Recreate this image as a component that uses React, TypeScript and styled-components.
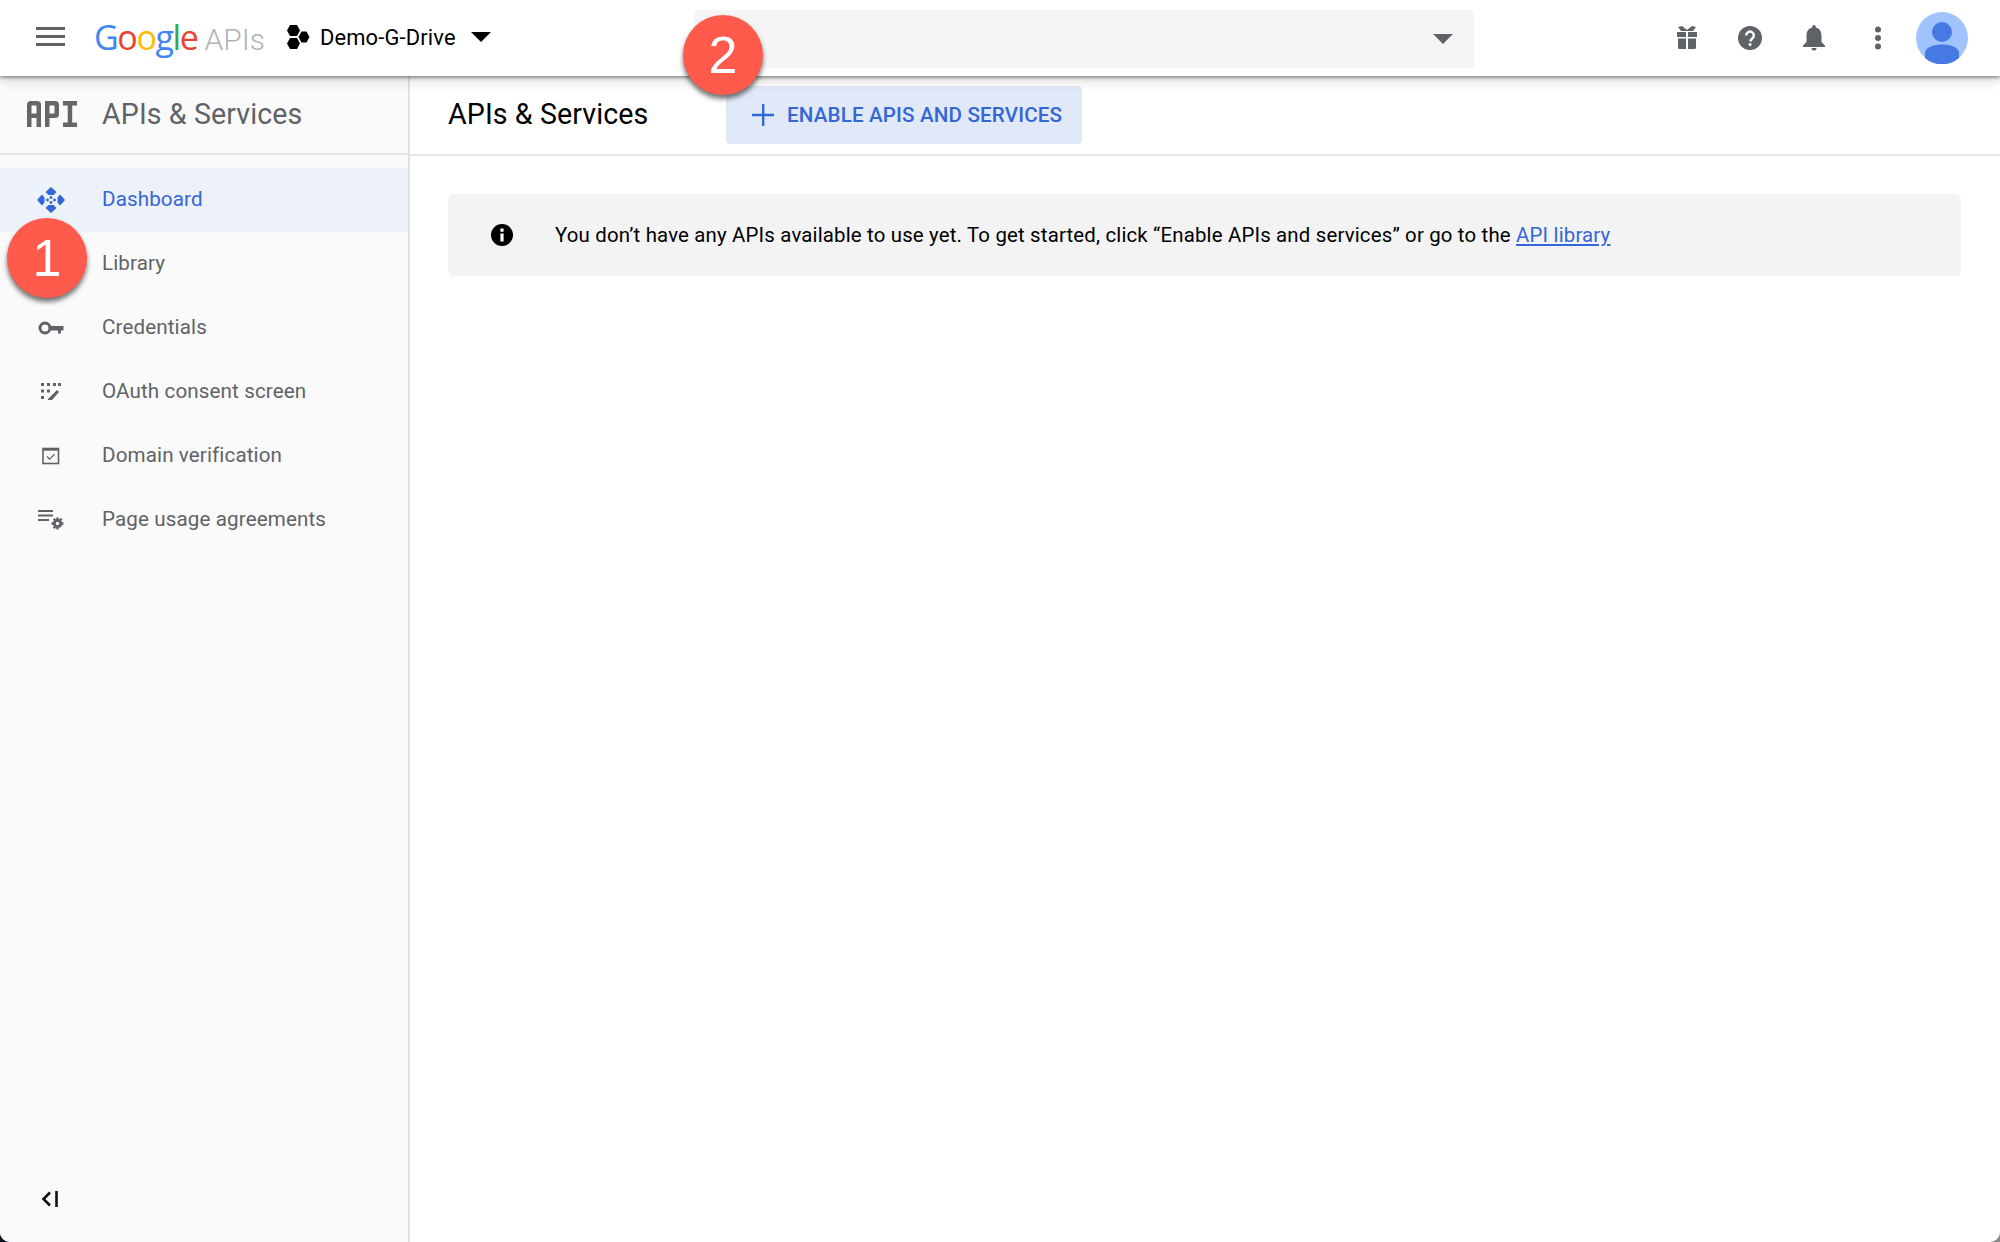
import React from "react";
import styled, { createGlobalStyle } from "styled-components";

const GlobalStyle = createGlobalStyle`
  html, body {
    margin: 0;
    padding: 0;
    background: linear-gradient(to right, #0d1420 50%, #8a8a8a 50%);
  }
  body {
    font-family: Roboto, "Liberation Sans", sans-serif;
  }
`;

const Page = styled.div`
  position: relative;
  width: 2000px;
  height: 1242px;
  background: #fff;
  overflow: hidden;
  border-bottom-left-radius: 10px;
  border-bottom-right-radius: 10px;
  display: flex;
  flex-direction: column;
`;

const TopBar = styled.header`
  position: relative;
  z-index: 2;
  flex: none;
  height: 76px;
  box-sizing: border-box;
  background: #fff;
  box-shadow: 0 2px 3px rgba(0, 0, 0, 0.36), 0 4px 12px rgba(0, 0, 0, 0.16);
  display: flex;
  align-items: center;
  padding: 0 0 0 36px;
`;

const Menu = styled.div`
  width: 29px;
  height: 19px;
  margin-top: -3px;
  display: flex;
  flex-direction: column;
  justify-content: space-between;

  span {
    display: block;
    height: 3px;
    background: #5f6368;
  }
`;

const Logo = styled.div`
  margin-left: 29px;
  width: 170px;
  display: flex;
  align-items: baseline;
  font-family: "Open Sans", sans-serif;
  font-size: 34px;
  letter-spacing: -1.4px;
  margin-top: -3px;
`;

const Letter = styled.span<{ $color: string }>`
  color: ${(p) => p.$color};
`;

const LogoApis = styled.span`
  margin-left: 7px;
  color: #b3b3b3;
  font-family: Roboto, sans-serif;
  font-weight: 300;
  font-size: 30px;
  letter-spacing: 0;
`;

const Project = styled.div`
  margin-left: 23px;
  width: 383px;
  display: flex;
  align-items: center;
  margin-top: -2px;
  color: #000;
  font-size: 21.9px;
  letter-spacing: 0.15px;

  span {
    margin-left: 10px;
  }

  svg:last-child {
    margin-left: 15px;
  }
`;

const SearchBox = styled.div`
  margin-left: 24px;
  width: 780px;
  height: 58px;
  margin-top: 2px;
  border-radius: 2px;
  background: #f5f5f5;
  display: flex;
  align-items: center;
  justify-content: flex-end;
  padding-right: 21px;
  box-sizing: border-box;
`;

const TopIcons = styled.div`
  margin-left: 202px;
  display: flex;
  align-items: center;
  gap: 40px;
  margin-top: -1px;
`;

const Avatar = styled.div`
  margin-left: 26px;
  width: 52px;
  height: 52px;
`;

const Body = styled.div`
  flex: 1;
  display: flex;
  min-height: 0;
`;

const Sidebar = styled.aside`
  flex: none;
  width: 410px;
  box-sizing: border-box;
  background: #fafafa;
  border-right: 2px solid #e2e2e2;
  display: flex;
  flex-direction: column;
`;

const SideHead = styled.div`
  flex: none;
  height: 79px;
  box-sizing: border-box;
  border-bottom: 2px solid #e6e6e6;
  display: flex;
  align-items: center;
  padding: 0 0 1px 27px;
  color: #5f6368;
  font-size: 28.6px;
  letter-spacing: 0.1px;
`;

const ApiBadge = styled.svg`
  width: 50px;
  height: 26px;
  margin-right: 25px;
  flex: none;
`;

const NavList = styled.nav`
  flex: 1;
  padding-top: 13px;
`;

const NavRow = styled.div<{ $active?: boolean }>`
  height: 64px;
  display: flex;
  align-items: center;
  padding: 0 0 2px 36px;
  box-sizing: border-box;
  font-size: 20.6px;
  letter-spacing: 0.12px;
  color: ${(p) => (p.$active ? "#3367d6" : "#5f6368")};
  background: ${(p) => (p.$active ? "#ecf1fa" : "transparent")};
`;

const NavIcon = styled.span`
  flex: none;
  width: 30px;
  height: 30px;
  margin: 2px 36px 0 0;
  display: flex;
  align-items: center;
  justify-content: center;
`;

const Collapse = styled.div`
  flex: none;
  height: 84px;
  display: flex;
  padding: 33px 0 0 41px;
  box-sizing: border-box;
`;

const Main = styled.main`
  flex: 1;
  min-width: 0;
`;

const MainHead = styled.div`
  height: 80px;
  box-sizing: border-box;
  border-bottom: 2px solid #e6e6e6;
  display: flex;
  align-items: center;
  padding-left: 38px;
`;

const Title = styled.h1`
  margin: 0 0 2px;
  width: 278px;
  font-size: 28.6px;
  font-weight: 400;
  color: #000;
  letter-spacing: 0.1px;
`;

const EnableButton = styled.div`
  width: 356px;
  height: 58px;
  box-sizing: border-box;
  border-radius: 4px;
  background: #e1e8f7;
  color: #3367d6;
  display: flex;
  align-items: center;
  padding-left: 26px;
  font-size: 20.6px;
  font-weight: 500;
  letter-spacing: 0.15px;

  svg {
    margin-right: 13px;
  }
`;

const InfoBox = styled.div`
  margin: 38px 39px 0 38px;
  height: 82px;
  border-radius: 6px;
  background: #f3f3f3;
  display: flex;
  align-items: center;
  padding-left: 43px;
  font-size: 20.4px;
  letter-spacing: 0.175px;
  color: #000;

  svg {
    margin-right: 42px;
    flex: none;
  }

  a {
    color: #3367d6;
    text-decoration: underline;
  }
`;

const Step = styled.div<{ $left: number; $top: number }>`
  position: absolute;
  z-index: 3;
  left: ${(p) => p.$left}px;
  top: ${(p) => p.$top}px;
  width: 80px;
  height: 80px;
  border-radius: 50%;
  background: #ff5a4b;
  box-shadow: 0 4px 5px rgba(0, 0, 0, 0.55);
  color: #fff;
  font-family: "Liberation Sans", Arial, sans-serif;
  font-size: 52px;
  line-height: 80px;
  text-align: center;
`;

const navItems = [
  {
    label: "Dashboard",
    active: true,
    icon: (
      <svg width="28" height="26" viewBox="0 0 28 26" fill="#3367d6">
        <path d="M14 0l5.500 5-3 3h-5l-3-3zM14 26l-5.500-5 3-3h5l3 3zM0 13l5-5.500 2.500 3v5L5 18.500zM28 13l-5 5.500-2.500-3v-5l2.500-3z" />
        <circle cx="10.500" cy="13" r="1.400" />
        <circle cx="17.500" cy="13" r="1.400" />
        <circle cx="14" cy="10.500" r="1.400" />
        <circle cx="14" cy="15.500" r="1.400" />
      </svg>
    ),
  },
  { label: "Library", icon: null },
  {
    label: "Credentials",
    icon: (
      <svg width="26" height="14" viewBox="0 0 26 14">
        <circle cx="7" cy="7" r="5" fill="none" stroke="#5f6368" strokeWidth="3" />
        <path d="M11 5h14.500v4.500H23v3h-3v-3h-9z" fill="#5f6368" />
      </svg>
    ),
  },
  {
    label: "OAuth consent screen",
    icon: (
      <svg width="20" height="18" viewBox="0 0 20 18" fill="#5f6368">
        <rect x="0" y="0" width="3" height="3" />
        <rect x="6" y="0" width="3" height="3" />
        <rect x="12" y="0" width="3" height="3" />
        <rect x="17" y="0" width="3" height="3" />
        <rect x="0" y="6.500" width="3" height="3" />
        <rect x="6" y="6.500" width="3" height="3" />
        <rect x="0" y="13" width="3" height="3" />
        <path d="M7 16l9-9 2 2-7 8H7z" />
      </svg>
    ),
  },
  {
    label: "Domain verification",
    icon: (
      <svg width="18" height="18" viewBox="0 0 18 18" fill="none" stroke="#5f6368">
        <rect x="1" y="1.500" width="15.500" height="15" strokeWidth="1.600" />
        <path d="M1 2.500h15.500" strokeWidth="2.400" />
        <path d="M5 9.500l2.600 2.600 5-5" strokeWidth="1.300" />
      </svg>
    ),
  },
  {
    label: "Page usage agreements",
    icon: (
      <svg width="26" height="20" viewBox="0 0 26 20" fill="#5f6368">
        <rect x="0" y="0" width="15" height="2" />
        <rect x="0" y="4.500" width="15" height="2" />
        <rect x="0" y="9" width="11" height="2" />
        <circle cx="19.500" cy="13.500" r="3.200" fill="none" stroke="#5f6368" strokeWidth="3" />
        <path d="M18.300 7.500h2.400v2h-2.400zM18.300 17.500h2.400v2h-2.400zM13.500 12.300h2v2.400h-2zM23.500 12.300h2v2.400h-2zM14.800 9.600l1.700-1.700 1.400 1.400-1.700 1.700zM21.100 15.900l1.700-1.700 1.400 1.400-1.700 1.700zM22.800 7.900l1.700 1.700-1.400 1.400-1.700-1.700zM16.500 19.100l-1.700-1.700 1.400-1.400 1.700 1.700z" />
      </svg>
    ),
  },
];

const logoLetters: [string, string][] = [
  ["G", "#4285f4"],
  ["o", "#ea4335"],
  ["o", "#fbbc05"],
  ["g", "#4285f4"],
  ["l", "#34a853"],
  ["e", "#ea4335"],
];

const App = () => {
  return (
    <Page>
      <GlobalStyle />
      <TopBar>
        <Menu>
          <span />
          <span />
          <span />
        </Menu>
        <Logo>
          {logoLetters.map(([ch, color], i) => (
            <Letter key={i} $color={color}>
              {ch}
            </Letter>
          ))}
          <LogoApis>APIs</LogoApis>
        </Logo>
        <Project>
          <svg width="23" height="24" viewBox="0 0 23 24" fill="#000">
            <path d="M3 0h7l3 5.500-3 5.500H3L0 5.500zM3 13h7l3 5.500L10 24H3L0 18.500zM14.500 6.500h5l3 5.500-3 5.500h-5L11.500 12z" />
          </svg>
          <span>Demo-G-Drive</span>
          <svg width="20" height="10" viewBox="0 0 20 10" fill="#000">
            <path d="M0 0h20L10 10z" />
          </svg>
        </Project>
        <SearchBox>
          <svg width="20" height="10" viewBox="0 0 20 10" fill="#5f6368">
            <path d="M0 0h20L10 10z" />
          </svg>
        </SearchBox>
        <TopIcons>
          <svg width="22" height="24" viewBox="0 0 22 24" fill="#5f6368">
            <path d="M1 6h9v5H1zM12 6h9v5h-9zM2 12.500h8V23H3.500A1.500 1.500 0 0 1 2 21.500zM12 12.500h8v9a1.500 1.500 0 0 1-1.500 1.500H12z" />
            <path d="M2 1l4-1 5 4 5-4 4 1-3 4H5z" />
          </svg>
          <svg width="24" height="24" viewBox="0 0 24 24">
            <circle cx="12" cy="12" r="12" fill="#5f6368" />
            <path d="M8.200 9.400a3.800 3.800 0 1 1 6 3.100c-1.200.9-1.700 1.400-1.700 2.900" fill="none" stroke="#fff" strokeWidth="2.400" />
            <rect x="10.800" y="17.200" width="2.600" height="2.600" fill="#fff" />
          </svg>
          <svg width="24" height="26" viewBox="0 0 24 26" fill="#5f6368">
            <path d="M12 0a1.800 1.800 0 0 1 1.800 1.800v.8C18 3.600 19.500 7 19.500 11v6l3.500 3.500V22H1v-1.500L4.500 17v-6c0-4 1.500-7.400 5.700-8.400v-.8A1.800 1.800 0 0 1 12 0z" />
            <path d="M9.500 23h5a2.500 2.500 0 0 1-5 0z" />
          </svg>
          <svg width="24" height="24" viewBox="0 0 24 24" fill="#5f6368">
            <circle cx="12" cy="3.500" r="3" />
            <circle cx="12" cy="12" r="3" />
            <circle cx="12" cy="20.500" r="3" />
          </svg>
        </TopIcons>
        <Avatar>
          <svg width="52" height="52" viewBox="0 0 52 52">
            <circle cx="26" cy="26" r="26" fill="#a1c3ff" />
            <circle cx="26" cy="20" r="10" fill="#4779e4" />
            <path d="M9 46V41c0-6 9-8.500 17-8.500S43 35 43 41v5a26 26 0 0 1-34 0z" fill="#4779e4" />
          </svg>
        </Avatar>
      </TopBar>
      <Body>
        <Sidebar>
          <SideHead>
            <ApiBadge viewBox="0 0 50 26" fill="#666">
              <path d="M0 4a4 4 0 0 1 4-4h6a4 4 0 0 1 4 4v22h-4.500v-9h-5v9H0zM4.500 4.500v8h5v-8z" fillRule="evenodd" />
              <path d="M18 0h10a4 4 0 0 1 4 4v9a4 4 0 0 1-4 4h-5.500v9H18zM22.500 4.500v8h5v-8z" fillRule="evenodd" />
              <path d="M36 0h14v4.500h-4.800v17H50V26H36v-4.500h4.700v-17H36z" />
            </ApiBadge>
            APIs &amp; Services
          </SideHead>
          <NavList>
            {navItems.map((item) => (
              <NavRow key={item.label} $active={item.active}>
                <NavIcon>{item.icon}</NavIcon>
                {item.label}
              </NavRow>
            ))}
          </NavList>
          <Collapse>
            <svg width="18" height="16" viewBox="0 0 18 16" fill="none" stroke="#111" strokeWidth="2.600">
              <path d="M9 1.500L2.500 8 9 14.500" />
              <path d="M15.500 0v16" />
            </svg>
          </Collapse>
        </Sidebar>
        <Main>
          <MainHead>
            <Title>APIs &amp; Services</Title>
            <EnableButton>
              <svg width="22" height="22" viewBox="0 0 22 22" fill="#3367d6">
                <path d="M10 0h2.400v9.800H22v2.400h-9.600V22H10v-9.800H0V9.800h10z" />
              </svg>
              ENABLE APIS AND SERVICES
            </EnableButton>
          </MainHead>
          <InfoBox>
            <svg width="22" height="22" viewBox="0 0 22 22">
              <circle cx="11" cy="11" r="11" fill="#000" />
              <rect x="9.400" y="9.500" width="3.200" height="8" fill="#fff" />
              <rect x="9.400" y="4.500" width="3.200" height="3.200" fill="#fff" />
            </svg>
            <span>
              You don’t have any APIs available to use yet. To get started, click “Enable APIs and services” or go to the{" "}
              <a>API library</a>
            </span>
          </InfoBox>
        </Main>
      </Body>
      <Step $left={7} $top={218}>1</Step>
      <Step $left={683} $top={15}>2</Step>
    </Page>
  );
};

export default App;
